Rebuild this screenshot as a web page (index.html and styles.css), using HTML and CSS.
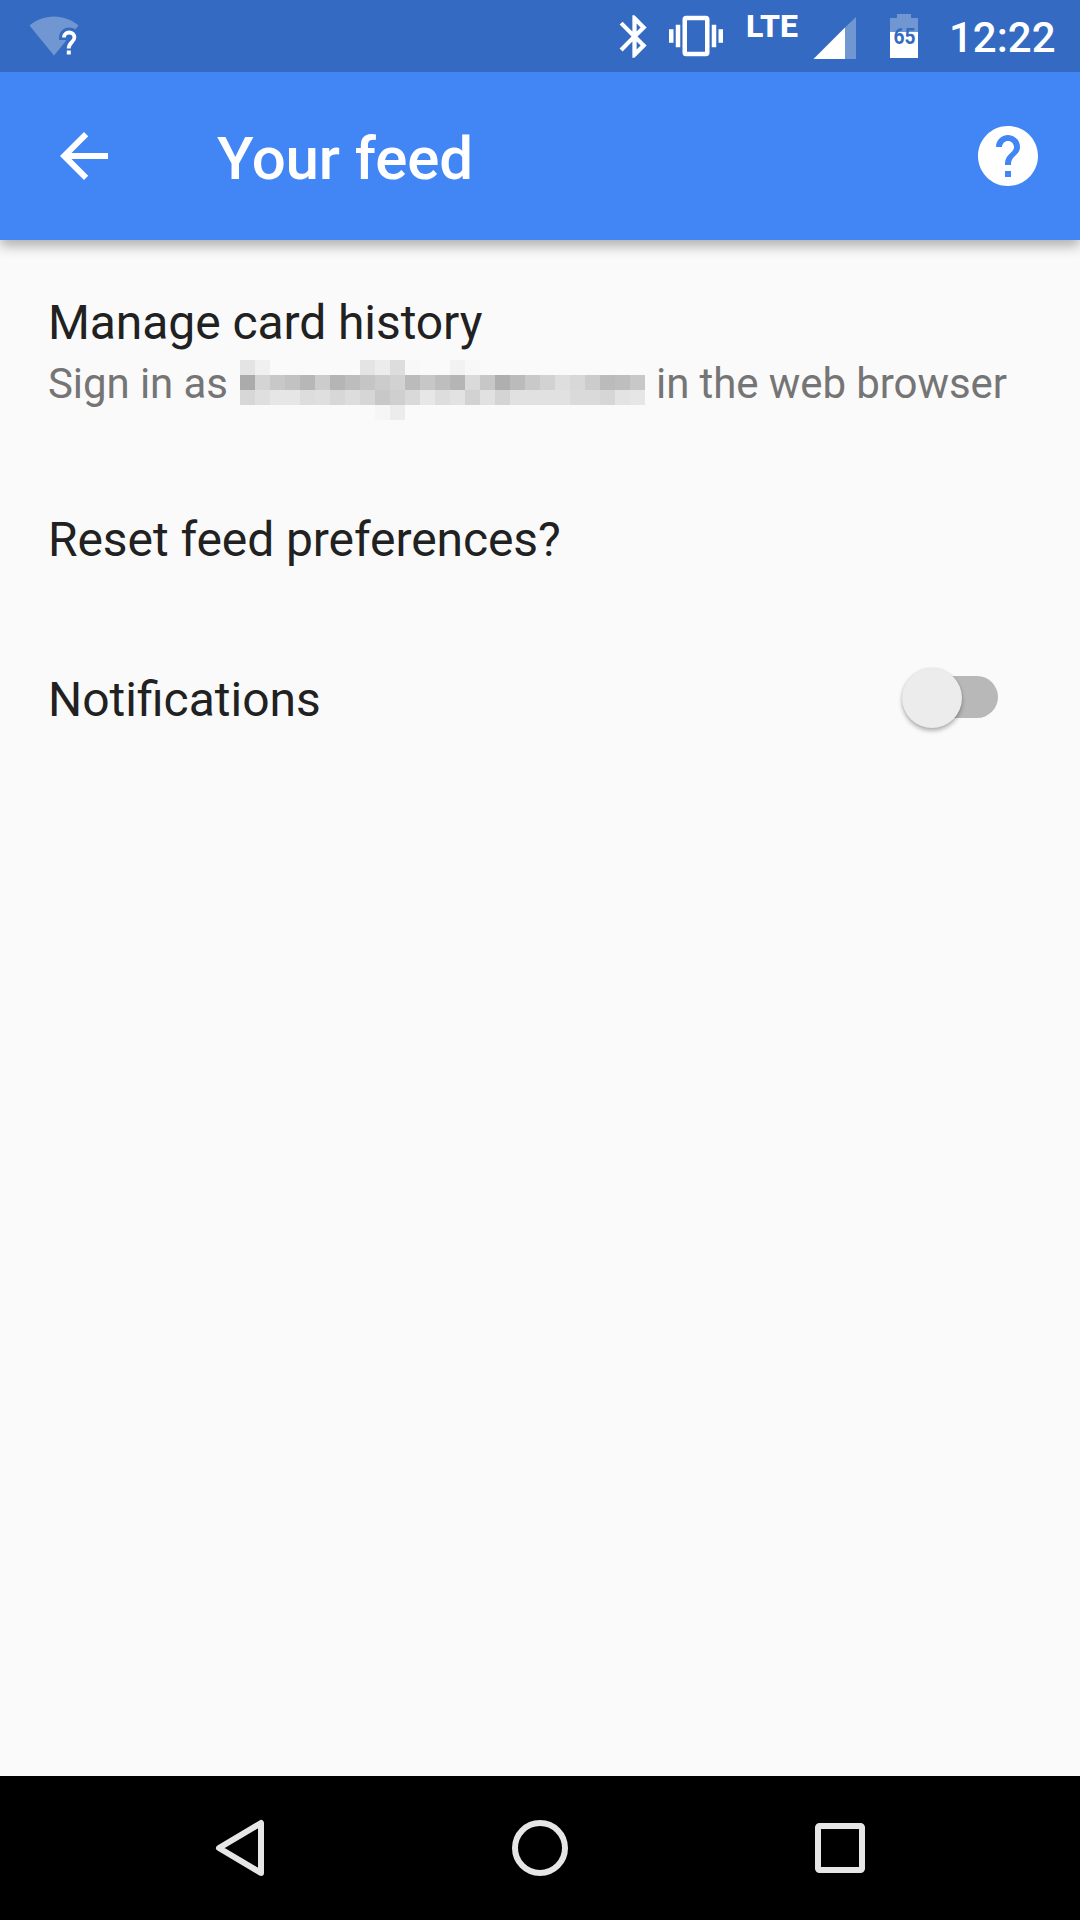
FILE: index.html
```html
<!DOCTYPE html>
<html lang="en">
<head>
  <meta charset="utf-8">
  <meta name="viewport" content="width=device-width, initial-scale=1.0">
  <title>Your feed</title>
  <link rel="stylesheet" href="styles.css">
</head>
<body>
  <div class="screen">
    <div class="status-bar">
      <svg class="wifi" viewBox="0 0 52 42" width="52" height="42">
        <path class="dim" d="M0.5 10.5C7 5 15.500 1.500 25 1.500S43 5 49.500 10.500L25 40.500z"/>
        <path class="cut" d="M30 25v-2c0-6 4.500-10.500 10-10.500 3 0 5.500 1 7.500 3l4.500 6V42H33l4-13v-4z"/>
        <path class="question" d="M35 22.500c0-3 2.200-5 5.200-5s5.200 2 5.200 5c0 4.500-5.700 5-5.700 11"/>
        <path class="white" d="M37.800 35.500h4v4h-4z"/>
      </svg>
      <div class="status-icons">
        <svg class="bluetooth" viewBox="0 0 24 24" width="51" height="51">
          <path class="white" d="M17.710 7.710L12 2h-1v7.590L6.410 5 5 6.410 10.590 12 5 17.590 6.410 19 11 14.410V22h1l5.710-5.710-4.300-4.290 4.300-4.290zM13 5.830l1.880 1.880L13 9.590V5.830zm1.880 10.460L13 18.170v-3.760l1.880 1.880z"/>
        </svg>
        <svg class="vibrate" viewBox="0 0 24 24" width="54" height="54">
          <path class="white" d="M0 15h2V9H0v6zm3 2h2V7H3v10zm19-8v6h2V9h-2zm-3 8h2V7h-2v10zM16.500 3h-9C6.670 3 6 3.670 6 4.500v15c0 .83.67 1.500 1.500 1.500h9c.83 0 1.500-.67 1.500-1.500v-15c0-.83-.67-1.500-1.500-1.500zM16 19H8V5h8v14z"/>
        </svg>
        <span class="lte">LTE</span>
        <svg class="signal" viewBox="0 0 43 42" width="43" height="42">
          <path class="dim" d="M32 10.500L43 0v42H32z"/>
          <path class="white" d="M0.5 42L32 10.500V42z"/>
        </svg>
        <svg class="battery" viewBox="0 0 28 44" width="28" height="44">
          <path class="dim" d="M7 0h14v4h7v14H0V4h7z"/>
          <path class="white" d="M0 18h28v26H0z"/>
          <text x="3.500" y="30" textLength="22" lengthAdjust="spacingAndGlyphs">65</text>
        </svg>
        <span class="clock">12:22</span>
      </div>
    </div>

    <div class="app-bar">
      <svg viewBox="0 0 24 24" width="72" height="72">
        <path class="white" d="M20 11H7.830l5.590-5.590L12 4l-8 8 8 8 1.410-1.410L7.830 13H20v-2z"/>
      </svg>
      <h1>Your feed</h1>
      <svg viewBox="0 0 24 24" width="72" height="72">
        <path class="white" d="M12 2C6.480 2 2 6.480 2 12s4.480 10 10 10 10-4.480 10-10S17.520 2 12 2zm1 17h-2v-2h2v2zm2.070-7.750l-.9.920C13.450 12.900 13 13.500 13 15h-2v-.5c0-1.100.45-2.100 1.170-2.830l1.240-1.260c.37-.36.59-.86.59-1.410 0-1.100-.9-2-2-2s-2 .9-2 2H8c0-2.210 1.790-4 4-4s4 1.790 4 4c0 .88-.36 1.680-.93 2.250z"/>
      </svg>
    </div>

    <div class="settings">
      <div class="item history">
        <div class="title">Manage card history</div>
        <div class="summary">
          <span>Sign in as</span>
          <div class="mosaic"></div>
          <span>in the web browser</span>
        </div>
      </div>
      <div class="item reset">
        <div class="title">Reset feed preferences?</div>
      </div>
      <div class="item notifications">
        <div class="title">Notifications</div>
        <div class="switch"><div class="knob"></div></div>
      </div>
    </div>

    <div class="nav-bar">
      <svg viewBox="0 0 60 60" width="60" height="60">
        <path d="M51 5v50L9 30z"/>
      </svg>
      <svg viewBox="0 0 60 60" width="60" height="60">
        <circle cx="30" cy="30" r="25"/>
      </svg>
      <svg viewBox="0 0 60 60" width="60" height="60">
        <rect x="8" y="8" width="44" height="44" rx="1.500"/>
      </svg>
    </div>
  </div>

  <script>
    // Grey levels of the hidden account name, one row per line
    const rows = [
      'e4 f0 -- -- -- -- -- -- e4 ec dd f8 -- -- f2 f8 -- -- -- -- -- -- -- -- -- -- --',
      'ab d4 c8 c2 b7 cc b5 bd c5 cc d2 bb c7 be b5 da c7 af bb c9 d2 de d8 cc bb be c8',
      'd7 df e6 e6 dd df d7 dd d6 c8 cf d9 e7 dd e2 d2 e1 d4 e1 e1 e1 e1 da da d6 e3 e6',
      '-- -- -- -- -- -- -- -- -- f6 ec -- -- -- -- -- -- -- -- -- -- -- -- -- -- -- --'
    ];
    const mosaic = document.querySelector('.mosaic');

    rows.join(' ').split(' ').forEach(level => {
      const cell = document.createElement('i');
      if (level !== '--') {
        cell.style.background = '#' + level + level + level;
      }
      mosaic.appendChild(cell);
    });
  </script>
</body>
</html>
```

FILE: styles.css
```css
* {
  margin: 0;
  padding: 0;
  box-sizing: border-box;
}

body {
  background: #fafafa;
  font-family: Roboto, sans-serif;
  overflow: hidden;
}

svg {
  display: block;
  flex: none;
}

.screen {
  width: 1080px;
  height: 1920px;
  display: flex;
  flex-direction: column;
}

.white {
  fill: #fff;
}

.dim {
  fill: rgba(255, 255, 255, 0.3);
}

/* status bar */
.status-bar {
  position: relative;
  z-index: 1;
  height: 72px;
  display: flex;
  justify-content: space-between;
  background: #346ac1;
  color: #fff;
}

.wifi {
  margin: 15px 0 0 29px;
}

.wifi .cut {
  fill: #346ac1;
}

.wifi .question {
  fill: none;
  stroke: #fff;
  stroke-width: 3.8;
}

.status-icons {
  display: flex;
  align-items: flex-start;
  padding-right: 24px;
}

.bluetooth {
  margin: 11px 9px 0 0;
}

.vibrate {
  margin: 9px 23px 0 0;
}

.lte {
  width: 67px;
  margin-top: 7px;
  font-size: 32px;
  line-height: 38px;
  font-weight: 800;
}

.signal {
  margin: 17px 34px 0 0;
}

.battery {
  margin: 14px 31px 0 0;
}

.battery text {
  fill: #346ac1;
  font-size: 22px;
  font-weight: 700;
}

.clock {
  width: 107px;
  margin-top: 13px;
  font-size: 42px;
  line-height: 50px;
  font-weight: 500;
  white-space: nowrap;
}

/* app bar */
.app-bar {
  height: 168px;
  display: flex;
  align-items: center;
  padding: 0 36px 0 48px;
  background: #4285f4;
  color: #fff;
  box-shadow: 0 6px 12px rgba(0, 0, 0, 0.3);
}

.app-bar h1 {
  flex: 1;
  margin-left: 97px;
  padding-top: 6px;
  font-size: 60px;
  line-height: 70px;
  font-weight: 500;
  letter-spacing: -0.1px;
}

/* settings list */
.settings {
  flex: 1;
}

.item {
  padding-left: 48px;
}

.title {
  font-size: 48px;
  line-height: 56px;
  letter-spacing: -0.08px;
  color: #212121;
}

.history {
  height: 218px;
  padding-top: 55px;
}

.summary {
  display: flex;
  align-items: center;
  height: 60px;
  padding-top: 4px;
  font-size: 42px;
  letter-spacing: -0.08px;
  color: #757575;
  white-space: nowrap;
}

.summary span:first-child {
  width: 192px;
}

.mosaic {
  display: grid;
  grid-template-columns: repeat(27, 15px);
  grid-auto-rows: 15px;
  margin: 14px 11px 0 0;
}

.reset {
  height: 160px;
  padding-top: 54px;
}

.notifications {
  display: flex;
  justify-content: space-between;
  align-items: center;
  height: 158px;
  padding-right: 82px;
}

.notifications .title {
  padding-top: 5px;
  letter-spacing: 0;
}

.switch {
  width: 87px;
  height: 42px;
  display: flex;
  align-items: center;
  border-radius: 21px;
  background: #b8b8b8;
}

.knob {
  width: 60px;
  height: 60px;
  margin: 1px 0 0 -9px;
  flex: none;
  border-radius: 50%;
  background: #ececec;
  box-shadow: 0 3px 4px rgba(0, 0, 0, 0.28), 0 0 2px rgba(0, 0, 0, 0.12);
}

/* navigation bar */
.nav-bar {
  height: 144px;
  display: flex;
  justify-content: center;
  align-items: center;
  gap: 240px;
  background: #000;
}

.nav-bar svg {
  fill: none;
  stroke: #e6e6e6;
  stroke-width: 6;
  stroke-linejoin: round;
}
```
